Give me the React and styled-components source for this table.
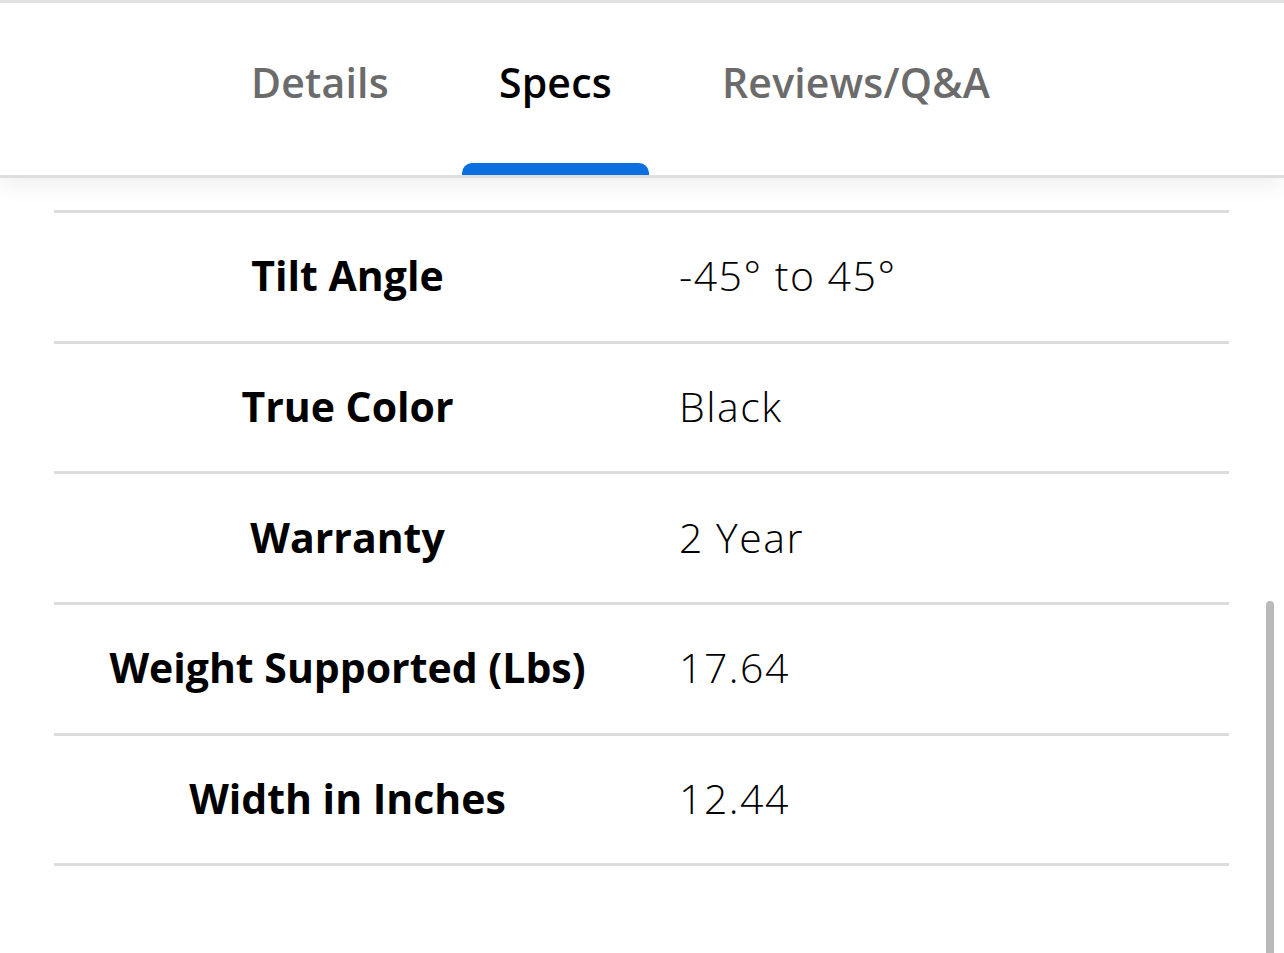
import React from "react";
import styled, { createGlobalStyle } from "styled-components";

const Global = createGlobalStyle`
    html, body {
        margin: 0;
        padding: 0;
        background: #fff;
        font-family: "Open Sans", "Noto Sans", sans-serif;
        color: #000;
        overflow: hidden;
    }
`

const Page = styled.div`
    width: 1284px;
    height: 953px;
    border-top: 3px solid #e2e2e2;
    box-sizing: border-box;
    position: relative;
    overflow: hidden;
`

const TabBar = styled.div`
    height: 172px;
    display: flex;
    align-items: stretch;
    gap: 36px;
    padding-left: 214px;
    border-bottom: 3px solid #dedede;
    box-shadow: 0 6px 22px rgba(0, 0, 0, 0.07);
    position: relative;
    background: #fff;
`

const Tab = styled.div`
    position: relative;
    padding: 0 37px;
    display: flex;
    align-items: flex-start;
    padding-top: 51px;
    font-size: 41px;
    font-weight: 600;
    letter-spacing: 0.2px;
    color: ${props => props.active ? "#000" : "#6b6b6b"};

    &::after {
        content: "";
        display: ${props => props.active ? "block" : "none"};
        position: absolute;
        left: 0;
        right: 0;
        bottom: 0;
        height: 12px;
        border-radius: 10px 10px 0 0;
        background: #0c6fe0;
    }
`

const Specs = styled.div`
    margin: 32px 55px 0 54px;
    border-bottom: 3px solid #dcdcdc;
`

const Row = styled.div`
    height: 127.7px;
    box-sizing: content-box;
    border-top: 3px solid #dcdcdc;
    display: grid;
    grid-template-columns: 587px 1fr;
    align-items: center;
`

const Label = styled.div`
    text-align: center;
    font-size: 41px;
    font-weight: 700;
    margin-top: -3px;
`

const Value = styled.div`
    padding-left: 38px;
    font-size: 41px;
    font-weight: 300;
    letter-spacing: 1.5px;
    margin-top: -3px;
`

const ScrollThumb = styled.div`
    position: absolute;
    left: 1266px;
    top: 598px;
    bottom: 0;
    width: 8px;
    border-radius: 4px 4px 0 0;
    background: #bababa;
`

const tabs = ["Details", "Specs", "Reviews/Q&A"];

const specs = [
    ["Tilt Angle", "-45° to 45°"],
    ["True Color", "Black"],
    ["Warranty", "2 Year"],
    ["Weight Supported (Lbs)", "17.64"],
    ["Width in Inches", "12.44"],
];

const App = () => {
    return (
        <Page>
            <Global />
            <TabBar>
                {tabs.map(tab =>
                    <Tab key={tab} active={tab === "Specs"}>{tab}</Tab>
                )}
            </TabBar>
            <Specs>
                {specs.map(([label, value]) =>
                    <Row key={label}>
                        <Label>{label}</Label>
                        <Value>{value}</Value>
                    </Row>
                )}
            </Specs>
            <ScrollThumb />
        </Page>
    );
};

export default App;
